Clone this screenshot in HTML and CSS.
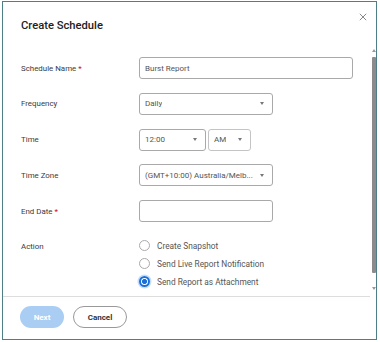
FILE: index.html
```html
<!DOCTYPE html>
<html lang="en">
<head>
<meta charset="UTF-8" />
<meta name="viewport" content="width=device-width, initial-scale=1.0" />
<title>Create Schedule</title>
<link rel="stylesheet" href="styles.css">
</head>
<body>
<div class="dialog">
  <!-- Header -------------------------------------------------------- -->
  <header class="dlg-head">
    <h1>Create Schedule</h1>
    <button class="close" aria-label="Close">
      <svg viewBox="0 0 10 10" width="8" height="8"><path d="M1 1 L9 9 M9 1 L1 9" stroke="#777" stroke-width="1.1" fill="none"/></svg>
    </button>
  </header>

  <!-- Body ---------------------------------------------------------- -->
  <div class="dlg-body">
    <div class="form">
      <div class="row">
        <label>Schedule Name <span class="req">*</span></label>
        <input class="field wide" type="text" value="Burst Report" />
      </div>
      <div class="row">
        <label>Frequency</label>
        <div class="select mid"><span>Daily</span><i class="caret"></i></div>
      </div>
      <div class="row">
        <label>Time</label>
        <div class="pair">
          <div class="select hour"><span>12:00</span><i class="caret"></i></div>
          <div class="select ampm"><span>AM</span><i class="caret"></i></div>
        </div>
      </div>
      <div class="row">
        <label>Time Zone</label>
        <div class="select mid"><span>(GMT+10:00) Australia/Melb...</span><i class="caret"></i></div>
      </div>
      <div class="row">
        <label>End Date <span class="req">*</span></label>
        <input class="field mid" type="text" value="" />
      </div>
      <div class="row action">
        <label>Action</label>
        <div class="radios">
          <div class="radio"><span class="dot"></span>Create Snapshot</div>
          <div class="radio"><span class="dot"></span>Send Live Report Notification</div>
          <div class="radio on"><span class="dot"></span>Send Report as Attachment</div>
        </div>
      </div>
    </div>
  </div>

  <!-- scrollbar drawn over the body -->
  <div class="scrollbar">
    <i class="arrow up"></i>
    <div class="thumb"></div>
    <i class="arrow down"></i>
  </div>

  <!-- Footer -------------------------------------------------------- -->
  <footer class="dlg-foot">
    <button class="btn primary" disabled>Next</button>
    <button class="btn">Cancel</button>
  </footer>
</div>
</body>
</html>
```

FILE: styles.css
```css
:root {
  --text: #3a3a3a;
  --sub: #555;
  --line: #a9a9a9;
  --blue: #1a6fd8;
}
* { box-sizing: border-box; margin: 0; }
html, body { height: 100%; background: #fff; font-family: Roboto, "Liberation Sans", Arial, sans-serif; color: var(--text); }
body { padding: 1px 3px 2px 2px; }

.dialog { position: relative; height: 339px; border: 1px solid #4f7f86; display: flex; flex-direction: column; background: #fff; }

/* --------------------  Header  -------------------- */
.dlg-head { position: relative; height: 44px; padding: 17px 0 0 18px; }
.dlg-head h1 { font-size: 11.2px; font-weight: 500; color: #222; }
.close { position: absolute; right: 7px; top: 9px; border: none; background: none; padding: 0; width: 12px; height: 12px; display: flex; align-items: center; justify-content: center; }

/* --------------------  Body  ---------------------- */
.dlg-body { flex: 1; overflow: hidden; border-bottom: 1px solid #ddd; margin-right: 6px; }

.scrollbar { position: absolute; right: 0; top: 46px; width: 5px; height: 250px; display: flex; flex-direction: column; align-items: center; }
.scrollbar .thumb { width: 4px; height: 216px; background: #8c8c8c; border-radius: 1px; margin: 5px 0 14px; }
.arrow { width: 0; height: 0; border-left: 2px solid transparent; border-right: 2px solid transparent; }
.arrow.up { border-bottom: 3px solid #999; margin-top: 1px; }
.arrow.down { border-top: 3px solid #999; }

.form { display: flex; flex-direction: column; gap: 13.75px; padding: 11px 12px 40px 18px; }
.row { display: grid; grid-template-columns: 118px 1fr; align-items: center; min-height: 22px; }
.row label { font-size: 7.9px; color: var(--text); }
.req { color: #d0021b; }

.field, .select { height: 22px; border: 1px solid var(--line); border-radius: 3px; background: #fff; font: inherit; font-size: 8px; color: var(--sub); padding: 0 5px; }
.field.wide { width: 214px; }
.mid { width: 134px; }
.select { display: flex; align-items: center; justify-content: space-between; }
.select span { white-space: nowrap; overflow: hidden; }
.caret { width: 0; height: 0; border-left: 2.5px solid transparent; border-right: 2.5px solid transparent; border-top: 3px solid #777; margin-right: 3px; flex: none; }

.pair { display: flex; gap: 2px; }
.hour { width: 67px; }
.ampm { width: 43px; border-color: #c4c4c4; }

/* --------------------  Radios  -------------------- */
.row.action { align-items: start; margin-top: 5px; }
.row.action label { padding-top: 1px; }
.radios { display: flex; flex-direction: column; gap: 6px; margin-top: -1px; }
.radio { display: flex; align-items: center; gap: 7px; font-size: 8.3px; color: var(--sub); height: 12px; }
.dot { width: 11px; height: 11px; border: 1px solid #aaa; border-radius: 50%; flex: none; }
.radio.on .dot { border: 2px solid var(--blue); background: radial-gradient(circle, var(--blue) 0 2.2px, #fff 2.6px); box-shadow: 0 0 0 1.5px #c9ddf6; }

/* --------------------  Footer  -------------------- */
.dlg-foot { display: flex; gap: 9px; padding: 9px 0 0 17px; height: 42px; }
.btn { height: 22px; border-radius: 11px; font: inherit; font-size: 8px; font-weight: 700; padding: 0 14px; border: 1px solid #999; background: #fff; color: #333; }
.btn.primary { width: 44px; border: none; background: #a9cdf3; color: #fff; padding: 0; }
.btn + .btn { width: 54px; padding: 0; }
```
